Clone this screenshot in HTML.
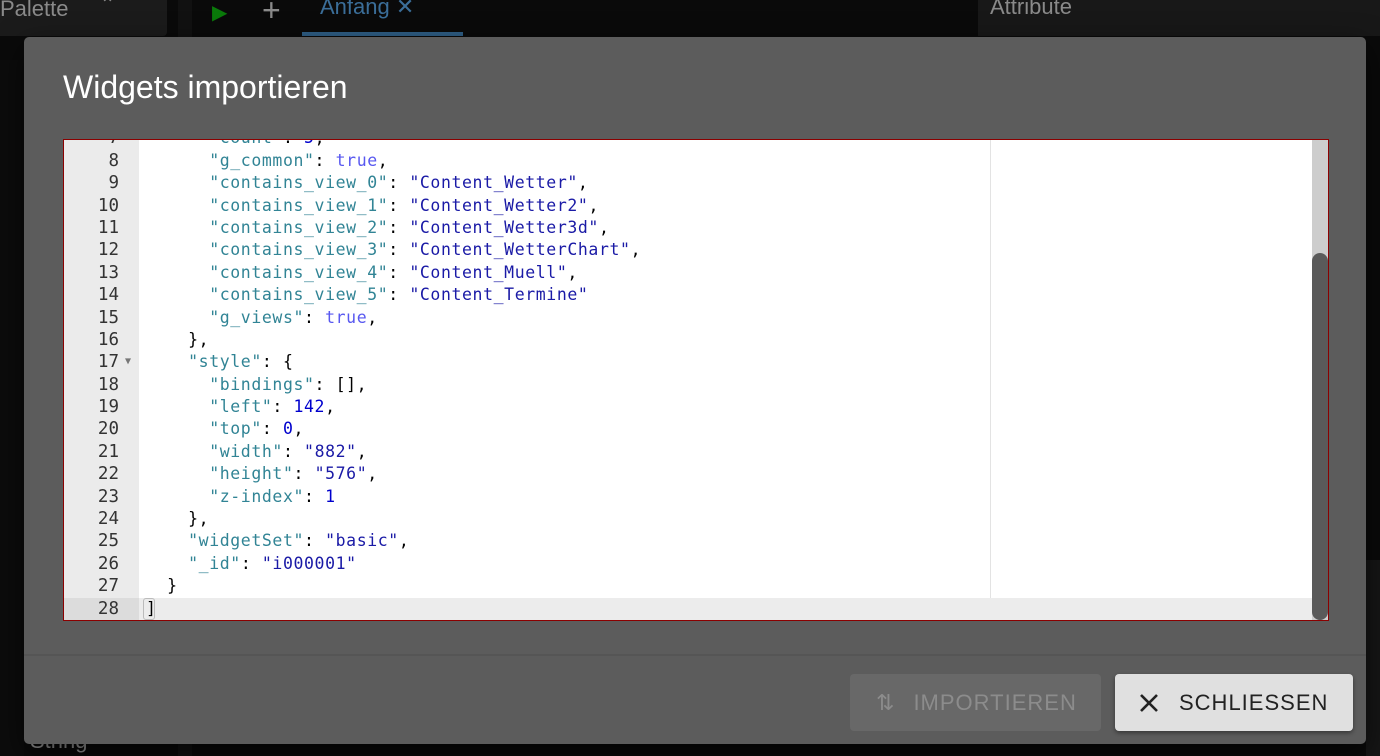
<!DOCTYPE html>
<html><head><meta charset="utf-8"><style>
*{margin:0;padding:0;box-sizing:border-box}
body{width:1380px;height:756px;overflow:hidden;background:#0a0a0a;font-family:"Liberation Sans",sans-serif;position:relative}
.abs{position:absolute}
.dlg{left:24px;top:37px;width:1342px;height:707px;background:#5c5c5c;border-radius:5px;box-shadow:0 10px 30px rgba(0,0,0,.6)}
.title{left:63px;top:69px;color:#fff;font-size:32px}
.ed{left:63px;top:139px;width:1266px;height:482px;border:1px solid #8b0000;background:#fff;overflow:hidden}
.gut{left:0;top:0;width:75px;height:100%;background:#ebebeb}
.code{left:0;top:-12.6px;width:100%;font-family:"DejaVu Sans Mono","Liberation Mono",monospace;font-size:16.5px}
.ln{height:22.4px;line-height:22.4px;white-space:pre;position:relative}
.n{position:absolute;left:0;width:55px;text-align:right;color:#333;font-size:17.5px}
.t{position:absolute;left:82px;color:#000;letter-spacing:0.6px}
.k{color:#318495}.s{color:#1a1aa6}.b{color:#5858f0}.d{color:#0000cd}
.hl{background:#ececec}
.hl .n{background:#dcdcdc;width:75px;padding-right:20px}
.sb{left:1248px;top:0;width:16px;height:100%;background:#cdcdcd}
.th{left:1248px;top:113px;width:16px;height:367px;background:#5a5a5a;border-radius:8px}
.pm{left:926px;top:0;width:1px;height:100%;background:#e3e3e3}
.btn{top:674px;height:57px;border-radius:4px;font-size:22px;letter-spacing:1px;display:flex;align-items:center}
.cur{display:inline-block;width:12px;height:22px;border:1px solid #bbb;border-radius:3px;vertical-align:middle;position:absolute;left:-3px;top:0}
</style></head><body>
<div class="abs" style="left:0;top:0;width:167px;height:36px;background:#1b1b1b;border-radius:0 0 4px 0"></div>
<div class="abs" style="left:0;top:-4px;color:#8a8a8a;font-size:22px">Palette</div>
<div class="abs" style="left:100px;top:-6px;color:#8a8a8a;font-size:18px">⌃</div>
<div class="abs" style="left:178px;top:0;width:14px;height:756px;background:#111"></div>
<div class="abs" style="left:212px;top:0;color:#0a7a0a;font-size:20px">▶</div>
<div class="abs" style="left:262px;top:-8px;color:#8a8a8a;font-size:32px">+</div>
<div class="abs" style="left:320px;top:-6px;color:#3b6e99;font-size:22px">Anfang ✕</div>
<div class="abs" style="left:302px;top:32px;width:161px;height:4px;background:#2f5f87"></div>
<div class="abs" style="left:978px;top:0;width:402px;height:36px;background:#181818"></div>
<div class="abs" style="left:990px;top:-6px;color:#8a8a8a;font-size:22px">Attribute</div>
<div class="abs" style="left:1366px;top:560px;width:14px;height:196px;background:#161616"></div>
<div class="abs" style="left:0;top:60px;width:24px;height:696px;background:#0c0c0c"></div>
<div class="abs" style="left:30px;top:728px;color:#999;font-size:22px">String</div>

<div class="abs dlg"></div>
<div class="abs title">Widgets importieren</div>
<div class="abs ed">
<div class="abs gut"></div>
<div class="abs pm"></div>
<div class="abs code">
<div class="ln"><span class="n">7</span><span class="t">      <span class="k">"count"</span>: <span class="d">5</span>,</span></div>
<div class="ln"><span class="n">8</span><span class="t">      <span class="k">"g_common"</span>: <span class="b">true</span>,</span></div>
<div class="ln"><span class="n">9</span><span class="t">      <span class="k">"contains_view_0"</span>: <span class="s">"Content_Wetter"</span>,</span></div>
<div class="ln"><span class="n">10</span><span class="t">      <span class="k">"contains_view_1"</span>: <span class="s">"Content_Wetter2"</span>,</span></div>
<div class="ln"><span class="n">11</span><span class="t">      <span class="k">"contains_view_2"</span>: <span class="s">"Content_Wetter3d"</span>,</span></div>
<div class="ln"><span class="n">12</span><span class="t">      <span class="k">"contains_view_3"</span>: <span class="s">"Content_WetterChart"</span>,</span></div>
<div class="ln"><span class="n">13</span><span class="t">      <span class="k">"contains_view_4"</span>: <span class="s">"Content_Muell"</span>,</span></div>
<div class="ln"><span class="n">14</span><span class="t">      <span class="k">"contains_view_5"</span>: <span class="s">"Content_Termine"</span></span></div>
<div class="ln"><span class="n">15</span><span class="t">      <span class="k">"g_views"</span>: <span class="b">true</span>,</span></div>
<div class="ln"><span class="n">16</span><span class="t">    },</span></div>
<div class="ln"><span class="n">17</span><span class="abs" style="left:61px;top:0;color:#777;font-size:10px">▼</span><span class="t">    <span class="k">"style"</span>: {</span></div>
<div class="ln"><span class="n">18</span><span class="t">      <span class="k">"bindings"</span>: [],</span></div>
<div class="ln"><span class="n">19</span><span class="t">      <span class="k">"left"</span>: <span class="d">142</span>,</span></div>
<div class="ln"><span class="n">20</span><span class="t">      <span class="k">"top"</span>: <span class="d">0</span>,</span></div>
<div class="ln"><span class="n">21</span><span class="t">      <span class="k">"width"</span>: <span class="s">"882"</span>,</span></div>
<div class="ln"><span class="n">22</span><span class="t">      <span class="k">"height"</span>: <span class="s">"576"</span>,</span></div>
<div class="ln"><span class="n">23</span><span class="t">      <span class="k">"z-index"</span>: <span class="d">1</span></span></div>
<div class="ln"><span class="n">24</span><span class="t">    },</span></div>
<div class="ln"><span class="n">25</span><span class="t">    <span class="k">"widgetSet"</span>: <span class="s">"basic"</span>,</span></div>
<div class="ln"><span class="n">26</span><span class="t">    <span class="k">"_id"</span>: <span class="s">"i000001"</span></span></div>
<div class="ln"><span class="n">27</span><span class="t">  }</span></div>
<div class="ln hl"><span class="n">28</span><span class="t"><span class="cur"></span>]</span></div>
</div>
<div class="abs sb"></div>
<div class="abs th"></div>
</div>
<div class="abs" style="left:24px;top:654px;width:1342px;height:2px;background:#555"></div>
<div class="abs btn" style="left:850px;width:251px;background:#686868;color:#8c8c8c;padding-left:26px"><span style="font-size:22px;margin-right:18px">⇅</span>IMPORTIEREN</div>
<div class="abs btn" style="left:1115px;width:238px;background:#e0e0e0;color:#222;padding-left:24px;box-shadow:0 2px 4px rgba(0,0,0,.4)">
<svg width="20" height="20" viewBox="0 0 20 20" style="margin-right:20px"><path d="M2 2L18 18M18 2L2 18" stroke="#222" stroke-width="2.6"/></svg>SCHLIESSEN</div>
</body></html>
